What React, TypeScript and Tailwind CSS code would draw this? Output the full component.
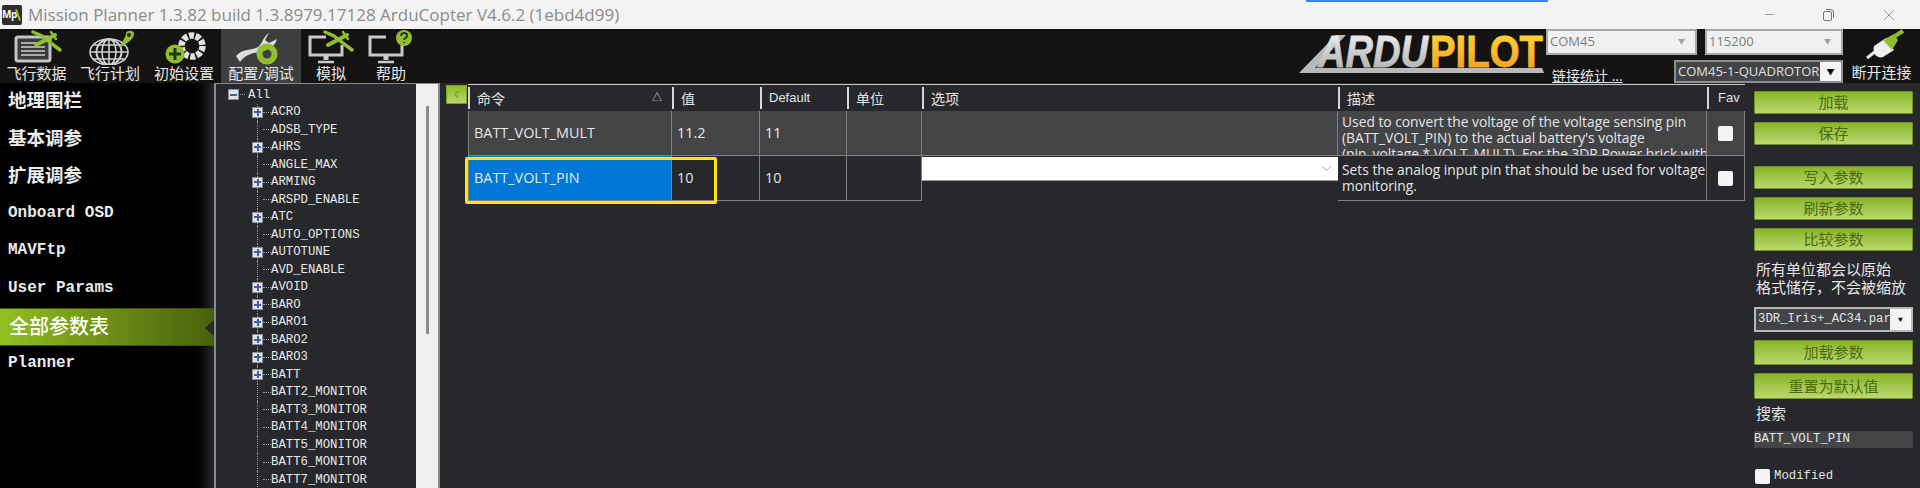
import React from "react";
import { ChevronDown, ChevronLeft, Minus, X } from "lucide-react";

const UI_FONT = "font-['Open_Sans','Noto_Sans_CJK_SC',sans-serif]";
const MONO_FONT = "font-['Liberation_Mono','Noto_Sans_CJK_SC',monospace]";

function Plane({ x, y }: { x: number; y: number }) {
  return (
    <g transform={`translate(${x} ${y})`} stroke="#8fbf2f" strokeLinecap="round" fill="none">
      <path d="M3 14 L22 4" strokeWidth="4" />
      <path d="M0 1 L9 5 L14 9 L27 19" strokeWidth="3.5" />
      <path d="M18 1 L23 8" strokeWidth="2.5" />
    </g>
  );
}

function Monitor() {
  return (
    <g fill="none" stroke="#c9c9c9">
      <path d="M25 8 H9 V26 H41 V16" strokeWidth="3" />
      <path d="M25 27 V31" strokeWidth="5" />
      <path d="M17 33 H33" strokeWidth="2.5" />
    </g>
  );
}

const toolIcons: Record<string, React.ReactNode> = {
  data: (
    <>
      <rect x="9" y="8" width="34" height="24" rx="2" fill="#3a3a3a" stroke="#c4c4c4" strokeWidth="3" />
      <path d="M14 14 H36 M14 18 H38 M14 22 H38 M14 26 H38" stroke="#d0d0d0" strokeWidth="1.6" />
      <Plane x={26} y={2} />
    </>
  ),
  plan: (
    <>
      <g fill="none" stroke="#d0d0d0" strokeWidth="1.6">
        <circle cx="29" cy="23" r="12.5" strokeWidth="2" />
        <ellipse cx="29" cy="23" rx="19" ry="13" />
        <ellipse cx="29" cy="23" rx="7" ry="13" />
        <path d="M10 23 H48 M13 16 H45 M13 30 H45 M29 10 V36" />
      </g>
      <path d="M40 18 C42 12 45 10 46 5 C46 1 53 1 54 4 C55 9 48 14 40 18 Z" fill="#8fbf2f" />
      <circle cx="49" cy="6" r="2" fill="#2a2a2a" />
    </>
  ),
  setup: (
    <>
      <circle cx="38" cy="17" r="10.5" fill="none" stroke="#e2e2e2" strokeWidth="6.5" strokeDasharray="5 1.6" />
      <circle cx="21" cy="25" r="9.5" fill="#8fbf2f" />
      <path d="M21 19 V31 M15 25 H27" stroke="#26331a" strokeWidth="3" />
    </>
  ),
  config: (
    <>
      <path d="M5 27 C12 19 20 22 27 18 C32 14 31 9 38 4 L34 11 L38 14 L46 10 C44 18 38 19 33 22 C24 24 16 24 9 33 Z" fill="#dcdcdc" />
      <circle cx="36" cy="25" r="7.5" fill="none" stroke="#8fbf2f" strokeWidth="6" />
    </>
  ),
  sim: (
    <>
      <Monitor />
      <Plane x={24} y={2} />
    </>
  ),
  help: (
    <>
      <Monitor />
      <circle cx="43" cy="9" r="8" fill="#8fbf2f" />
      <path d="M40 7 C40 3 47 3 46 7 C46 9 43 9 43 11 M43 13 V14" fill="none" stroke="#26331a" strokeWidth="1.8" />
    </>
  ),
};

const toolItems = [
  { id: "data", label: "飞行数据", width: "w-[73px]" },
  { id: "plan", label: "飞行计划", width: "w-[74px]" },
  { id: "setup", label: "初始设置", width: "w-[74px]" },
  { id: "config", label: "配置/调试", width: "w-[80px]", active: true },
  { id: "sim", label: "模拟", width: "w-[60px]" },
  { id: "help", label: "帮助", width: "w-[60px]" },
];

const sideItems = [
  { label: "地理围栏", cjk: true },
  { label: "基本调参", cjk: true },
  { label: "扩展调参", cjk: true },
  { label: "Onboard OSD" },
  { label: "MAVFtp" },
  { label: "User Params" },
  { label: "全部参数表", cjk: true, active: true },
  { label: "Planner" },
];

const treeItems: [string, boolean][] = [
  ["ACRO", true],
  ["ADSB_TYPE", false],
  ["AHRS", true],
  ["ANGLE_MAX", false],
  ["ARMING", true],
  ["ARSPD_ENABLE", false],
  ["ATC", true],
  ["AUTO_OPTIONS", false],
  ["AUTOTUNE", true],
  ["AVD_ENABLE", false],
  ["AVOID", true],
  ["BARO", true],
  ["BARO1", true],
  ["BARO2", true],
  ["BARO3", true],
  ["BATT", true],
  ["BATT2_MONITOR", false],
  ["BATT3_MONITOR", false],
  ["BATT4_MONITOR", false],
  ["BATT5_MONITOR", false],
  ["BATT6_MONITOR", false],
  ["BATT7_MONITOR", false],
];

function ExpandBox({ open }: { open?: boolean }) {
  return (
    <span className="relative z-10 flex h-[11px] w-[11px] shrink-0 items-center justify-center border border-[#8d8d8d] bg-[#dfe3ea]">
      <span className="absolute h-[2px] w-[7px] bg-[#3f5fa8]" />
      {!open && <span className="absolute h-[7px] w-[2px] bg-[#3f5fa8]" />}
    </span>
  );
}

function TreeRow({ label, branch }: { label: string; branch: boolean }) {
  return (
    <div className="flex h-[17.5px] items-center pl-[36px]">
      <span className="relative flex h-full w-[11px] shrink-0 items-center">
        <span className="absolute left-[5px] top-0 h-full border-l border-dotted border-[#9a9a9a]" />
        {branch && <ExpandBox />}
      </span>
      <span className="w-[8px] shrink-0 border-t border-dotted border-[#9a9a9a]" />
      <span className="whitespace-nowrap text-[12.3px] leading-none text-[#e8e8e8]">{label}</span>
    </div>
  );
}

function GreenButton({ label, className }: { label: string; className: string }) {
  return (
    <button className={`w-full rounded-[1px] border border-[#6f9320] bg-gradient-to-b from-[#88b524] to-[#b9d96c] text-[15px] leading-none text-[#4d6a12] ${className}`}>
      {label}
    </button>
  );
}

function HeadCell({ label, className = "" }: { label: string; className?: string }) {
  return (
    <div className={`flex h-[26px] items-center py-[2px] ${className}`}>
      <span className="h-full w-[2px] shrink-0 bg-[#d8d8d8]" />
      <span className="ml-[7px] whitespace-nowrap text-[14px] text-[#e4e4e4]">{label}</span>
    </div>
  );
}

function Checkbox() {
  return <span className="h-[15px] w-[15px] rounded-[2px] bg-[#f4f4f4]" />;
}

export default function App() {
  const cell = "flex h-[45px] items-center border-b border-r border-[#808080] text-[#e6e6e6]";
  const rowOne = `${cell} bg-[#434446] pl-[5px] text-[14.4px]`;
  const rowTwo = `${cell} bg-[#26282b] pl-[5px] text-[14.4px]`;

  return (
    <div className={`relative flex h-[488px] w-[1920px] flex-col overflow-hidden bg-[#26282b] ${UI_FONT}`}>
      {/* Title bar */}
      <div className="relative flex h-[29px] shrink-0 items-center bg-[#f3f3f3]">
        <div className="relative ml-[2px] flex h-[20px] w-[20px] items-center justify-start rounded-[2px] bg-[#2d2d2d] text-[10px] font-bold tracking-tighter text-white">
          Mp
          <span className="absolute right-[3px] top-[4px] h-[12px] w-[2px] rotate-[-20deg] bg-[#8fbf2f]" />
        </div>
        <span className="ml-[6px] whitespace-nowrap text-[17px] text-[#8b8b8b]">
          Mission Planner 1.3.82 build 1.3.8979.17128 ArduCopter V4.6.2 (1ebd4d99)
        </span>
        <div className="absolute left-[1306px] top-0 h-[2px] w-[242px] bg-[#3b82f6]" />
        <div className="ml-auto flex items-center text-[#777777]">
          <Minus size={15} strokeWidth={1} className="mr-[44px]" />
          <svg width="14" height="14" viewBox="0 0 14 14" fill="none" stroke="#777777" className="mr-[45px]">
            <rect x="2.5" y="3.5" width="8" height="9" rx="1.5" />
            <path d="M5 1.5 H10 C11.5 1.5 12.5 2.5 12.5 4 V10" />
          </svg>
          <X size={18} strokeWidth={1} className="mr-[22px]" />
        </div>
      </div>

      {/* Toolbar */}
      <div className="flex h-[54px] shrink-0 bg-[#151311]">
        {toolItems.map((item) => (
          <div key={item.id} className={`flex shrink-0 flex-col items-center ${item.width} ${item.active ? "bg-[#3d3e40]" : ""}`}>
            <svg width="60" height="36" viewBox="0 0 60 36" className="shrink-0">
              {toolIcons[item.id]}
            </svg>
            <span className="mt-[-1px] whitespace-nowrap text-[15px] leading-[18px] text-[#e6e6e6]">{item.label}</span>
          </div>
        ))}
        <svg width="250" height="54" viewBox="0 0 250 54" className="ml-auto shrink-0">
          <defs>
            <linearGradient id="ardu" x1="0" y1="0" x2="0" y2="1">
              <stop offset="0" stopColor="#f6f6f6" />
              <stop offset="1" stopColor="#a9a9a9" />
            </linearGradient>
            <linearGradient id="pilot" x1="0" y1="0" x2="0" y2="1">
              <stop offset="0" stopColor="#ffdc3c" />
              <stop offset="1" stopColor="#f09a1c" />
            </linearGradient>
          </defs>
          <path d="M3 44 L40 6 H50 L19 39 H246 L248 44 Z" fill="#b9b9b9" />
          <text x="22" y="38" textLength="110" lengthAdjust="spacingAndGlyphs" fontFamily="Liberation Sans" fontWeight="700" fontStyle="italic" fontSize="44" fill="url(#ardu)" stroke="url(#ardu)" strokeWidth="0.8">
            ARDU
          </text>
          <text x="134" y="38" textLength="113" lengthAdjust="spacingAndGlyphs" fontFamily="Liberation Sans" fontWeight="700" fontSize="44" fill="url(#pilot)" stroke="url(#pilot)" strokeWidth="0.8">
            PILOT
          </text>
        </svg>
        <div className="flex w-[297px] shrink-0 flex-col">
          <div className="flex gap-[8px]">
            <div className="flex h-[26px] w-[151px] items-center justify-between border-2 border-[#a8a8a8] bg-[#f0f0f0] px-[2px] text-[13px] text-[#7d7d7d]">
              COM45
              <span className="mr-[8px] text-[7px] text-[#a0a0a0]">▼</span>
            </div>
            <div className="flex h-[26px] w-[138px] items-center justify-between border-2 border-[#a8a8a8] bg-[#f0f0f0] px-[2px] text-[13px] text-[#7d7d7d]">
              115200
              <span className="mr-[8px] text-[7px] text-[#a0a0a0]">▼</span>
            </div>
          </div>
          <div className="mt-[5px] flex items-end">
            <span className="ml-[6px] w-[122px] whitespace-nowrap text-[14px] leading-[15px] text-[#e6e6e6] underline">链接统计 ...</span>
            <div className="flex h-[23px] w-[169px] items-stretch border-2 border-[#8e8e8e] bg-[#434446] text-[13px] text-[#e0e0e0]">
              <span className="flex-1 overflow-hidden whitespace-nowrap pl-[2px] leading-[19px]">COM45-1-QUADROTOR</span>
              <span className="flex w-[21px] items-center justify-center bg-[#f4f4f4] text-[8px] text-black">▼</span>
            </div>
          </div>
        </div>
        <div className="flex w-[77px] shrink-0 flex-col items-center">
          <svg width="50" height="35" viewBox="0 0 50 35" className="shrink-0">
            <path d="M10 29 L19 22" stroke="#e8e8e8" strokeWidth="3" />
            <path d="M17 17 L29 9 L37 21 L26 28 C20 30 15 24 17 17 Z" fill="#efefef" />
            <path d="M26 11 L37 5 L41 11 L35 21 Z" fill="#8fbf2f" />
            <path d="M38 7 L46 2" stroke="#8fbf2f" strokeWidth="4" />
          </svg>
          <span className="mt-[-1px] whitespace-nowrap text-[15px] leading-[18px] text-[#e6e6e6]">断开连接</span>
        </div>
      </div>

      {/* Main */}
      <div className="flex min-h-0 flex-1">
        <nav className="w-[214px] shrink-0 bg-gradient-to-r from-black from-[88%] to-[#26282b]">
          {sideItems.map((item) => (
            <div
              key={item.label}
              className={`relative flex h-[37.5px] items-center font-bold ${
                item.active
                  ? "border-y border-[#3f530c] bg-gradient-to-r from-[#93c020] to-[#48620c] pl-[9px] text-[20px] font-medium text-white"
                  : `pb-[3px] pl-[8px] text-[#ececec] ${item.cjk ? "text-[18.5px]" : `text-[16px] ${MONO_FONT}`}`
              }`}
            >
              {item.label}
              {item.active && (
                <span className="absolute right-0 top-[11px] h-0 w-0 border-y-[8px] border-r-[9px] border-y-transparent border-r-[#26282b]" />
              )}
            </div>
          ))}
        </nav>

        {/* Parameter tree */}
        <div className={`flex h-full w-[226px] shrink-0 border-l-2 border-r-2 border-t border-[#8a8a8a] ${MONO_FONT}`}>
          <div className="min-w-0 flex-1 overflow-hidden pt-[2px]">
            <div className="flex h-[17.5px] items-center pl-[12px]">
              <ExpandBox open />
              <span className="ml-[1px] w-[5px] shrink-0 border-t border-dotted border-[#9a9a9a]" />
              <span className="ml-[3px] text-[12.3px] leading-none text-[#e8e8e8]">All</span>
            </div>
            {treeItems.map(([label, branch]) => (
              <TreeRow key={label} label={label} branch={branch} />
            ))}
          </div>
          <div className="flex w-[22px] shrink-0 justify-center bg-[#efefef] pt-[22px]">
            <span className="h-[228px] w-[3px] bg-[#8c8c8c]" />
          </div>
        </div>

        {/* Collapse button */}
        <div className="ml-[6px] w-[22px] shrink-0 pt-[2px]">
          <div className="flex h-[19px] w-[21px] items-center justify-center border border-[#7d9f27] bg-gradient-to-b from-[#8dbb26] to-[#b6d866] text-[#3f5a0d]">
            <ChevronLeft size={13} strokeWidth={1.2} />
          </div>
        </div>

        {/* Parameter table */}
        <div className="relative mt-[1px] w-[1277px] shrink-0 self-start border-t border-[#c8c8c8]">
          <div className="grid grid-cols-[204px_88px_87px_75px_416px_369px_38px]">
            <div className="relative">
              <HeadCell label="命令" />
              <span className="absolute right-[10px] top-[5px] text-[10px] text-[#d8d8d8]">△</span>
            </div>
            <HeadCell label="值" />
            <div className="flex h-[26px] items-center py-[2px]">
              <span className="h-full w-[2px] shrink-0 bg-[#d8d8d8]" />
              <span className="ml-[7px] font-['Liberation_Sans'] text-[13px] text-[#e4e4e4]">Default</span>
            </div>
            <HeadCell label="单位" />
            <HeadCell label="选项" />
            <HeadCell label="描述" />
            <div className="flex h-[26px] items-center py-[2px]">
              <span className="h-full w-[2px] shrink-0 bg-[#d8d8d8]" />
              <span className="ml-[9px] font-['Liberation_Sans'] text-[13px] text-[#e4e4e4]">Fav</span>
            </div>

            <div className={`${rowOne} border-l`}>BATT_VOLT_MULT</div>
            <div className={rowOne}>11.2</div>
            <div className={rowOne}>11</div>
            <div className={rowOne} />
            <div className={rowOne} />
            <div className={`${cell} items-start overflow-hidden bg-[#434446] pl-[4px] pt-[3px] text-[13.8px] leading-[16px]`}>
              <p className="whitespace-nowrap">
                Used to convert the voltage of the voltage sensing pin
                <br />
                (BATT_VOLT_PIN) to the actual battery's voltage
                <br />
                (pin_voltage * VOLT_MULT). For the 3DR Power brick with
              </p>
            </div>
            <div className={`${cell} justify-center bg-[#434446]`}>
              <Checkbox />
            </div>

            <div className={`${cell} border-l bg-[#0078d7] pl-[5px] text-[14.4px]`}>BATT_VOLT_PIN</div>
            <div className={rowTwo}>10</div>
            <div className={rowTwo}>10</div>
            <div className={rowTwo} />
            <div className="h-[45px] pt-[1px]">
              <div className="flex h-[24px] items-center justify-end border-b border-[#9a9a9a] bg-white pr-[4px] text-[#666666]">
                <ChevronDown size={15} strokeWidth={1} />
              </div>
            </div>
            <div className={`${cell} items-start bg-[#26282b] pl-[4px] pt-[6px] text-[13.8px] leading-[16px]`}>
              <p className="whitespace-nowrap">
                Sets the analog input pin that should be used for voltage
                <br />
                monitoring.
              </p>
            </div>
            <div className={`${cell} justify-center bg-[#26282b]`}>
              <Checkbox />
            </div>
          </div>
          {/* Yellow highlight drawn over the selected row */}
          <div className="absolute left-[-3px] top-[72px] h-[47px] w-[252px] rounded-[2px] border-[3px] border-[#ffe800]" />
        </div>

        {/* Action column */}
        <div className="ml-[9px] flex w-[159px] shrink-0 flex-col pt-[8px]">
          <GreenButton label="加载" className="h-[23px]" />
          <GreenButton label="保存" className="mt-[8px] h-[23px]" />
          <GreenButton label="写入参数" className="mt-[21px] h-[23px]" />
          <GreenButton label="刷新参数" className="mt-[8px] h-[23px]" />
          <GreenButton label="比较参数" className="mt-[8px] h-[23px]" />
          <p className="ml-[2px] mt-[10px] w-[157px] text-[15px] leading-[17.5px] text-[#e6e6e6]">
            所有单位都会以原始
            <br />
            格式储存，不会被缩放
          </p>
          <div className={`mt-[11px] flex h-[25px] border-2 border-[#b8b8b8] bg-[#434446] text-[12.3px] text-[#e6e6e6] ${MONO_FONT}`}>
            <span className="flex-1 overflow-hidden whitespace-nowrap pl-[2px] leading-[20px]">3DR_Iris+_AC34.param</span>
            <span className="flex w-[21px] items-center justify-center bg-[#f4f4f4] text-[8px] text-black">▼</span>
          </div>
          <GreenButton label="加载参数" className="mt-[8px] h-[25px]" />
          <GreenButton label="重置为默认值" className="mt-[8px] h-[26px]" />
          <span className="ml-[2px] mt-[5px] text-[15px] leading-[18px] text-[#e6e6e6]">搜索</span>
          <div className={`mt-[9px] h-[17px] bg-[#434446] text-[12.3px] leading-[17px] text-[#e6e6e6] ${MONO_FONT}`}>BATT_VOLT_PIN</div>
          <div className={`ml-[1px] mt-[19px] flex items-center gap-[4px] text-[12.3px] text-[#e6e6e6] ${MONO_FONT}`}>
            <Checkbox />
            Modified
          </div>
        </div>
      </div>
    </div>
  );
}
